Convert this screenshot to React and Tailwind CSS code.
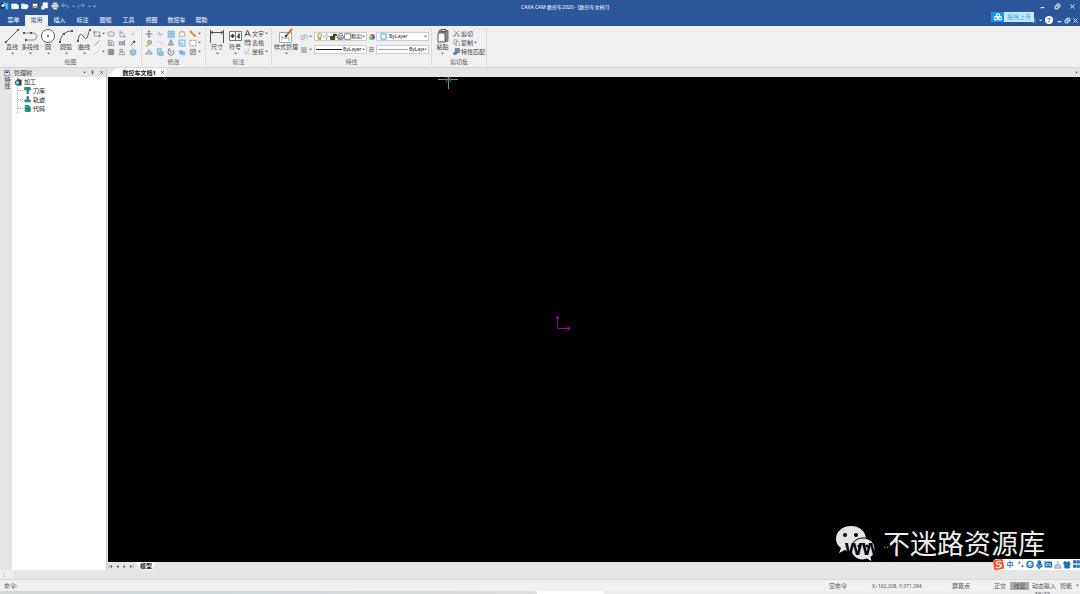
import { useState } from 'react'

// Small line drawings share one 12x12 grid
const glyphs = {
  point: <circle cx="6" cy="6" r="1.2" fill="#888" stroke="none" />,
  rect: <path d="M2 3h8v6H2z M1 2h2v2H1z M9 8h2v2H9z" />,
  ellipse: <><ellipse cx="6" cy="6" rx="5" ry="3.5" /><path d="M6 5.5v1" /></>,
  angle: <path d="M3 1v9h8 M3 3c4 0 6 3 7 7" />,
  slash: <path d="M2 10L10 2" />,
  blueSlash: <path d="M2 10L10 2" stroke="#8fc4e6" />,
  contour: <path d="M2 2h5l3 3v5H2z M4 5h3v3H4z" />,
  block: <path d="M2 4h5v5H2z M7 6l3-4v8z" fill="#a9c9e4" />,
  arrow: <path d="M2 10l4-4 M6 4l3-1-1 3z" fill="#222" stroke="#222" />,
  hatch: <path d="M2 2h8v8H2z M2 5h8 M2 7.5h8 M5 2v8 M7.5 2v8" fill="#bbb" />,
  region: <path d="M3 2h4v4H3z M2 8c2-3 6-3 8 0v2H2z" />,
  cube: <path d="M2 4l4-2 4 2v5l-4 2-4-2z M2 4l4 2 4-2 M6 6v5" fill="#a9d6f0" stroke="#6f8fa6" />,
  move: <path d="M6 1v10 M1 6h10 M4.500 2.500L6 1l1.500 1.500 M4.500 9.500L6 11l1.500-1.500" stroke="#444" />,
  trim: <path d="M1 6h10 M4 2l3 8" stroke="#78add2" />,
  array: <path d="M1.500 1.500h4v4h-4z M7 1.500h4v4H7z M1.500 7h4v4h-4z M7 7h4v4H7z" fill="#bfe0f5" stroke="#4b9fd3" />,
  stretch: <path d="M2 3h8v7H2z M4 2h4" strokeDasharray="2 1" />,
  pencil: <><path d="M2 2l8 8" stroke="#db8b22" strokeWidth="3" /><path d="M1 1l2 1" stroke="#333" /></>,
  paint: <><circle cx="7" cy="5" r="3" fill="#9ccbe8" /><path d="M1 10h5" stroke="#e0c200" strokeWidth="2.500" /></>,
  fillet: <path d="M1 4h4c4 0 5 3 5 6" stroke="#8fc4e6" />,
  mirror: <path d="M6 1L2 9h8z M6 1v9" fill="#b8d7ec" />,
  scale: <path d="M1.500 1.500h9v9h-9z M1.500 6h4.500v4.500" fill="#d5effb" stroke="#4b9fd3" />,
  frame: <path d="M1.500 2h9v8h-9z" fill="#fff" strokeDasharray="3 1" />,
  flip: <path d="M1 9h10L8 5H4z M4 3h4" fill="#c5dced" />,
  copy: <path d="M2 1h6v9H2z M5 6h6v5H5z" fill="#b8def3" stroke="#6899bb" />,
  rotate: <path d="M3 3a4.500 4.500 0 1 0 6 0 M3 0v3h3 M6 5v3" stroke="#444" />,
  cloud: <path d="M2 4h5v4H2z M5 6h5v4H5z" fill="#9fd0ee" stroke="#4b9fd3" />,
  edit: <path d="M2 2h8v8H2z M4 8l5-5 M4 5h3" fill="#ccc" />,
  style: <path d="M2 4h4v6H2z M7 2v6 M7 2l4 2v6" stroke="#8aa6bb" />,
  weight: <path d="M2 3h8 M2 6h8 M2 9h8" stroke="#777" strokeWidth="1.500" />,
  text: <path d="M1.500 11L5.500 1h1l4 10 M3 7.500h6" stroke="#333" strokeWidth="1.500" />,
  table: <><path d="M1.500 2h9v8h-9z M1.500 5h9 M5 5v5" /><path d="M1.500 3.500h9" strokeWidth="2.500" /><path d="M8 8h3v3H8z" fill="#c44" stroke="none" /></>,
  coord: <path d="M2 2v8h8 M5 6h2 M8 2v5 M4 9l2-2" stroke="#7c9cb5" strokeDasharray="2 1" />,
  scissors: <><path d="M2 1l7 8 M10 1L3 9" stroke="#444" /><circle cx="2.500" cy="10" r="1.500" /><circle cx="9.500" cy="10" r="1.500" /></>,
  pages: <path d="M1.500 1.500h5v7h-5z M5 4h4l2 2v5.500H5z" fill="#fff" />,
  match: <path d="M4 1h7v7H4z M1 8h5v3H1z M6 4h3" fill="#7199bd" stroke="#456" />,
  newDoc: <path d="M1 3h7l3 2v5H1z" fill="#fff" stroke="#fff" />,
  open: <path d="M1 3h4l1 1h4v2H4l-2 4H1z M4 6h7l-2 4H3z" fill="#fff" stroke="#fff" />,
  save: <path d="M2 2h8v8H2z M4 7h4v3H4z" fill="#fff" stroke="#333" />,
  saveAs: <path d="M3 1h7v8H3z M1 6h4v5H1z" fill="#fff" stroke="#dde" />,
  print: <path d="M3 1h6v3H3z M1 4h10v4H1z M3 7h6v4H3z" fill="#fff" stroke="#8b99a8" />,
  undo: <path d="M4 2L1 5l3 3 M1 5h7c3 0 3 4 1 5" stroke="#8aa9d7" strokeWidth="1.500" />,
  redo: <path d="M8 2l3 3-3 3 M11 5H4C1 5 1 9 3 10" stroke="#7195ca" strokeWidth="1.500" />,
  min: <path d="M3 8h6" stroke="#fff" strokeWidth="2" />,
  restore: <path d="M2 5h5v5H2z M5 5V2h5v5H7" stroke="#fff" strokeWidth="1.500" />,
  close: <path d="M2.500 2.500l7 7 M9.500 2.500l-7 7" strokeWidth="1.500" stroke="currentColor" />,
  pin: <path d="M4 2h4 M5 2v5 M7 2v5 M3 7h6 M6 7v4" stroke="#555" strokeWidth="1.500" />,
  bulb: <path d="M6 1c-5 0-4 5-2 6v4h4V7c2-1 3-6-2-6z M4 8.500h4" fill="#ffe98a" stroke="#6b6340" />,
  sun: <><circle cx="6" cy="6" r="3" /><path d="M6 0v2 M6 10v2 M0 6h2 M10 6h2" stroke="#887f50" /></>,
  lock: <path d="M1 6h7v5H1z M6 6V2h5v3" fill="#4b5210" stroke="#2b3005" strokeWidth="1.500" />,
  printer: <path d="M3 5V1h6v4 M1 5h10v5H1z M3 8h6v3H3z" fill="#e5e5e5" stroke="#555" />,
  box: <path d="M1 1h10v10H1z" fill="#fff" stroke="#444" />,
  blueBox: <path d="M1.500 1.500h9v9h-9z" fill="#fff" stroke="#3997dd" strokeWidth="1.500" />,
  gear: <><path d="M5 1l6 2v8H5z" fill="#30353a" /><circle cx="5" cy="7" r="3.500" fill="#19b5aa" stroke="#164a4a" /><path d="M5 5v4 M3 7h4" stroke="#fff" /></>,
  tool: <path d="M1 1h10v4H8v6H5V5H1z M4 3h4" fill="#11b3ac" stroke="#164a4a" />,
  track: <path d="M5 1h3v6h3v3H2L1 7h4z" fill="#11b3ac" stroke="#164a4a" />,
  code: <path d="M2 1h6l3 3v7H2z M4 6h5 M4 8.500h5" fill="#11b3ac" stroke="#164a4a" />,
  first: <path d="M2 2v8 M9 3L5 6l4 3z" fill="#555" stroke="#555" />,
  prev: <path d="M8 3L4 6l4 3z" fill="#555" stroke="#555" />,
  next: <path d="M4 3l4 3-4 3z" fill="#555" stroke="#555" />,
  last: <path d="M10 2v8 M3 3l4 3-4 3z" fill="#555" stroke="#555" />,
}

const large = {
  line: <><path d="M2 14L14 2" /><path d="M1 14h2 M13 2h2" strokeWidth="2" /></>,
  polyline: <><path d="M2 5h9c5 0 5 7 0 7H4" stroke="#888" /><path d="M1 5h2 M8 5h2 M3 12h2" strokeWidth="2" /></>,
  circle: <><circle cx="8" cy="8" r="6.500" fill="#fff" /><circle cx="8" cy="8" r="1" fill="#555" stroke="none" /></>,
  arc: <><path d="M2 14C3 7 7 3 14 3" /><path d="M1 14h2 M5 6h2 M13 3h2" strokeWidth="2" /></>,
  curve: <><path d="M2 13c1-9 4-7 6-4 4 6 4-6 6-7" /><path d="M1 13h2 M13 2h2" strokeWidth="2" /></>,
  size: <path d="M1.500 2v13 M14.500 2v13 M2 4.500h12 M4 3L2 4.500 4 6 M12 3l2 1.500L12 6" />,
  symbol: <><path d="M2.500 3.500h12v9h-12z M8.500 3.500v9" fill="#fff" stroke="#777" /><path d="M3.500 8h4 M5.500 6v4 M12 5.500v5 M10 8.500h2" stroke="#333" strokeWidth="1.500" /></>,
  styles: <><path d="M1.500 4.500h12v10h-12z M4 12V8l3 3 4-2v4" fill="#fff" stroke="#9aabb8" /><path d="M9 7l5-6" stroke="#c47430" strokeWidth="2" /><path d="M7 9l2-2" stroke="#333" strokeWidth="2" /></>,
  paste: <><path d="M4 2.500h9v11H4z" fill="#888" stroke="#777" /><path d="M6 1.500h5v2H6z" fill="#ddd" /><path d="M3 5h7v9H3z" fill="#fff" /></>,
}

function Icon({ name, className = 'size-2' }) {
  return (
    <svg viewBox="0 0 12 12" aria-hidden="true" className={`shrink-0 ${className}`} fill="none" stroke="#777" strokeWidth="1">
      {glyphs[name]}
    </svg>
  )
}

function Caret({ className = 'text-[#555]' }) {
  return (
    <svg viewBox="0 0 4 4" aria-hidden="true" className={`size-[3px] shrink-0 ${className}`} fill="currentColor">
      <path d="M0 1h4L2 3z" />
    </svg>
  )
}

function BigButton({ icon, label, width = 'w-[18px]' }) {
  return (
    <button type="button" className={`flex shrink-0 flex-col items-center whitespace-nowrap ${width}`}>
      <svg viewBox="0 0 16 16" aria-hidden="true" className="size-4" fill="none" stroke="#555" strokeWidth="1">
        {large[icon]}
      </svg>
      <span className="leading-[7px]">{label}</span>
      <span className="flex h-[5px] items-center"><Caret /></span>
    </button>
  )
}

function Group({ title, width, children }) {
  return (
    <section className={`flex shrink-0 flex-col border-r border-[#dcdcdc] ${width}`}>
      <div className="flex h-[30px] items-start">{children}</div>
      <h2 className="text-center leading-[12px] text-[#666]">{title}</h2>
    </section>
  )
}

function SmallButton({ icon, caret }) {
  return (
    <button type="button" aria-label={icon} className="flex h-[9px] items-center gap-px">
      <Icon name={icon} />
      {caret && <Caret />}
    </button>
  )
}

function TextButton({ icon, label, caret }) {
  return (
    <button type="button" className="flex h-[9px] items-center gap-px whitespace-nowrap">
      <Icon name={icon} className="size-[7px]" />
      {label}
      {caret && <Caret />}
    </button>
  )
}

function Combo({ label, value, children }) {
  return (
    <div className="flex h-[9px] w-[53px] items-center border border-[#ccc] bg-white px-px">
      {children}
      <select aria-label={label} className="h-[7px] min-w-0 flex-1 appearance-none overflow-hidden bg-transparent text-[5px] leading-[7px] text-[#222]">
        <option>{value}</option>
      </select>
      <Caret />
    </div>
  )
}

const tabs = ['菜单', '常用', '插入', '标注', '图幅', '工具', '视图', '数控车', '帮助']

const drawIcons = ['ellipse', 'angle', 'point', 'contour', 'block', 'arrow', 'hatch', 'region', 'cube']

const modifyIcons = [
  'move', 'trim', 'array', 'stretch', 'pencil',
  'paint', 'fillet', 'mirror', 'scale', 'frame',
  'flip', 'copy', 'rotate', 'cloud', 'edit',
]

const treeItems = [
  { icon: 'tool', label: '刀库' },
  { icon: 'track', label: '轨迹' },
  { icon: 'code', label: '代码' },
]

function TitleBar({ active, onSelect }) {
  return (
    <header className="relative bg-[#2b579a] text-white">
      <div className="flex h-3 items-center">
        <div className="flex flex-[521_1_0] items-center">
          <svg viewBox="0 0 12 12" aria-hidden="true" className="mr-px size-2.5">
            <path d="M1 2h5v7H1z" fill="#102b5c" />
            <path d="M4 1l6 2v7H6V6H4z" fill="#42b3ef" />
            <path d="M2 4h3v3H2z" fill="#fff" />
          </svg>
          <div className="flex items-center gap-0.5">
            {['newDoc', 'open', 'save', 'saveAs', 'print'].map((name) => (
              <button key={name} type="button" aria-label={name}><Icon name={name} /></button>
            ))}
            <button type="button" aria-label="撤消" className="flex items-center gap-[3px]"><Icon name="undo" /><Caret className="text-[#9ab4dc]" /></button>
            <button type="button" aria-label="恢复" className="flex items-center gap-[3px]"><Icon name="redo" /><Caret className="text-[#9ab4dc]" /></button>
            <Caret className="text-[#c5d4ec]" />
          </div>
        </div>
        <h1 className="pt-0.5 text-[5px] whitespace-nowrap">CAXA CAM 数控车2020 - [数控车文档1]</h1>
        <div className="flex flex-[467_1_0] items-center justify-end gap-2 pr-1">
          <button type="button" aria-label="最小化"><Icon name="min" className="size-[7px]" /></button>
          <button type="button" aria-label="还原"><Icon name="restore" className="size-[7px]" /></button>
          <button type="button" aria-label="关闭"><Icon name="close" className="size-[7px] text-white" /></button>
        </div>
      </div>
      <nav className="flex h-3.5 items-end justify-between">
        <div className="flex pl-0.5">
          {tabs.map((tab) => (
            <button
              key={tab}
              type="button"
              onClick={() => onSelect(tab)}
              className={`h-[11px] leading-[11px] ${tab === '数控车' ? 'w-[27px]' : 'w-[23px]'} ${
                tab === active ? 'bg-[#f0f0f0] text-[#2b579a]' : 'text-white'
              }`}
            >
              {tab}
            </button>
          ))}
        </div>
        <div className="flex h-3 items-center gap-px pr-px">
          <span className="text-[5px] text-[#a9bfdf]">格</span>
          <Caret className="mx-0.5 text-white" />
          <button type="button" aria-label="帮助" className="mr-0.5 size-[8px] rounded-full bg-white text-[6px] leading-[8px] font-bold text-[#2b579a]">?</button>
          <button type="button" aria-label="最小化文档"><Icon name="min" className="size-[7px]" /></button>
          <button type="button" aria-label="还原文档"><Icon name="restore" className="size-[7px]" /></button>
          <button type="button" aria-label="关闭文档"><Icon name="close" className="size-[7px] text-white" /></button>
        </div>
      </nav>
      {/* Upload badge */}
      <button type="button" className="absolute top-3 right-[46px] flex h-2.5 w-[43px] items-center overflow-hidden rounded-[1px] bg-[#c9ebff] text-[#36a5f5]">
        <span className="flex h-full w-[13px] items-center justify-center bg-[#1296f3]">
          <svg viewBox="0 0 12 10" aria-hidden="true" className="h-2 w-2.5" fill="none" stroke="#fff" strokeWidth="1.500">
            <circle cx="6" cy="3" r="2" />
            <circle cx="3.500" cy="6.500" r="2" />
            <circle cx="8.500" cy="6.500" r="2" />
          </svg>
        </span>
        <span className="flex-1 text-center whitespace-nowrap">拖拽上传</span>
      </button>
    </header>
  )
}

function Ribbon() {
  return (
    <div className="flex h-[42px] border-b border-[#d5d5d5] bg-[#f0f0f0] pt-0.5 pb-px text-[#444]">
      <Group title="绘图" width="w-[142px]">
        <div className="flex pl-[3px]">
          <BigButton icon="line" label="直线" />
          <BigButton icon="polyline" label="多段线" />
          <BigButton icon="circle" label="圆" />
          <BigButton icon="arc" label="圆弧" />
          <BigButton icon="curve" label="曲线" />
        </div>
        <div className="flex">
          <div className="w-[14px] pt-px">
            <SmallButton icon="rect" caret />
            <SmallButton icon="slash" />
            <SmallButton icon="blueSlash" caret />
          </div>
          <div className="grid grid-cols-[11px_11px_11px] pt-px">
            {drawIcons.map((name) => <SmallButton key={name} icon={name} />)}
          </div>
        </div>
      </Group>
      <Group title="修改" width="w-[64px]">
        <div className="grid grid-cols-[11px_11px_11px_11px_12px] pt-px pl-[3px]">
          {modifyIcons.map((name, i) => <SmallButton key={name} icon={name} caret={i % 5 === 4} />)}
        </div>
      </Group>
      <Group title="标注" width="w-[66px]">
        <div className="flex pl-0.5">
          <BigButton icon="size" label="尺寸" />
          <BigButton icon="symbol" label="符号" />
        </div>
        <div className="pt-px">
          <TextButton icon="text" label="文字" caret />
          <TextButton icon="table" label="表格" />
          <TextButton icon="coord" label="坐标" caret />
        </div>
      </Group>
      <Group title="特性" width="w-[160px]">
        <BigButton icon="styles" label="样式管理" width="w-[28px]" />
        <div className="grid grid-cols-[14px_53px_9px_53px] items-center gap-y-1 pt-1">
          <SmallButton icon="style" caret />
          <Combo label="图层" value="粗实线层">
            {['bulb', 'sun', 'lock', 'printer', 'box'].map((name) => (
              <Icon key={name} name={name} className="size-[7px]" />
            ))}
          </Combo>
          <span className="mx-auto size-[6px] rounded-full bg-[conic-gradient(#e44,#c4c,#46e,#2cc,#3c3,#ed3,#e44)]" />
          <Combo label="颜色" value="ByLayer">
            <Icon name="blueBox" className="mx-0.5 size-[7px]" />
          </Combo>
          <SmallButton icon="weight" caret />
          <Combo label="线型" value="ByLayer">
            <span className="mr-px h-px w-[26px] shrink-0 bg-[#222]" />
          </Combo>
          <span className="flex justify-center"><Icon name="weight" className="size-[7px]" /></span>
          <Combo label="线宽" value="ByLayer">
            <span className="mr-px h-px w-[30px] shrink-0 bg-[#e08a8a]" />
          </Combo>
        </div>
      </Group>
      <Group title="剪切板" width="w-[55px]">
        <BigButton icon="paste" label="粘贴" width="w-[21px]" />
        <div className="pt-px">
          <TextButton icon="scissors" label="剪切" />
          <TextButton icon="pages" label="复制" caret />
          <TextButton icon="match" label="特性匹配" />
        </div>
      </Group>
    </div>
  )
}

function TreePanel() {
  return (
    <aside className="flex w-[95px] shrink-0 flex-col border-r border-[#ccc]">
      <div className="flex h-[9px] items-center gap-1 px-0.5 text-[#444]">
        <h2 className="flex-1">管理树</h2>
        <button type="button" aria-label="选项"><Caret /></button>
        <button type="button" aria-label="固定"><Icon name="pin" className="size-[5px]" /></button>
        <button type="button" aria-label="关闭面板"><Icon name="close" className="size-[5px] text-[#444]" /></button>
      </div>
      <div className="flex-1 bg-white pl-0.5 text-[#222]">
        <div className="flex h-[9px] items-center gap-0.5"><Icon name="gear" />加工</div>
        <ul className="ml-[3px] border-l border-dotted border-[#aaa]">
          {treeItems.map((item) => (
            <li key={item.label} className="flex h-[9px] items-center">
              <span className="mr-px w-[5px] border-t border-dotted border-[#aaa]" />
              <Icon name={item.icon} className="mr-0.5 size-[7px]" />
              {item.label}
            </li>
          ))}
        </ul>
      </div>
    </aside>
  )
}

function Watermark() {
  return (
    <div className="absolute right-[35px] bottom-0 flex h-9 items-center text-[27px] leading-9 whitespace-nowrap text-[#eee]">
      <svg viewBox="0 0 40 36" aria-hidden="true" className="mr-2 h-9 w-10">
        <path d="M16 0C7 0 1 6 1 13c0 4 2 7 5 9l-2 5 6-3c2 1 4 1 6 1 9 0 15-5 15-12S25 0 16 0z" fill="#e5e5e5" />
        <path d="M28 12c-7 0-12 5-12 11s5 11 12 11l4-1 5 3-1-5c3-2 4-5 4-8 0-6-5-11-12-11z" fill="#e5e5e5" stroke="#000" />
        <circle cx="10" cy="9" r="2" />
        <circle cx="21" cy="9" r="2" />
        <circle cx="24" cy="20" r="1.500" />
        <circle cx="32" cy="20" r="1.500" />
      </svg>
      <span>不迷路资源库</span>
      <span className="absolute top-1 left-2.5 font-['Liberation_Sans',sans-serif] text-[22px] font-bold text-black">www</span>
    </div>
  )
}

function Canvas() {
  return (
    <div className="relative flex-1 overflow-hidden bg-black">
      {/* Crosshair cursor */}
      <svg viewBox="0 0 20 12" aria-hidden="true" className="absolute top-0 left-[330px] h-3 w-5" fill="none">
        <path d="M0 2.500h20 M10.500 0v12" stroke="#888" />
        <path d="M8.500 0v4.500h4V0" stroke="#087a42" />
      </svg>
      {/* Origin axes */}
      <svg viewBox="0 0 16 16" aria-hidden="true" className="absolute top-[49%] left-[46%] h-4 w-4" fill="none" stroke="#a000a0">
        <path d="M2.500 1v12.500H15 M0.500 4l2-3 2 3 M12 11.500l3 2-3 2" />
      </svg>
      <Watermark />
    </div>
  )
}

function InputMethodBar() {
  return (
    <div className="absolute right-0 bottom-0 flex h-[11px] w-[87px] items-center justify-between rounded-l-sm bg-white text-[#1d6fc4]">
      <svg viewBox="0 0 12 12" aria-hidden="true" className="size-[11px] shrink-0">
        <rect x="0.500" y="0.500" width="11" height="11" rx="2" fill="#f4511e" transform="rotate(-8 6 6)" />
        <path d="M9 3C6 2 3 3 4 5s5 0 5 2-3 3-6 2" fill="none" stroke="#fff" strokeWidth="1.500" />
      </svg>
      <span className="pl-0.5 text-[7px] font-bold">中</span>
      <svg viewBox="0 0 74 10" aria-hidden="true" className="h-[9px] w-[66px]" fill="none" stroke="currentColor" strokeWidth="1.500">
        <path d="M5 3h2 M9 6l1 2" strokeWidth="2" />
        <circle cx="18" cy="5" r="3.500" />
        <path d="M16 4h1 M19 4h1 M16 6.500h4" strokeWidth="1" />
        <rect x="27" y="1" width="3" height="5" rx="1.500" fill="currentColor" />
        <path d="M25.500 5c0 4 6 4 6 0 M28.500 8v2" />
        <path d="M35 2.500h7v5h-7z M36 4.500h5 M37 6.500h3" />
        <path d="M49 1v4 M45.500 9c0-5 7-5 7 0z" stroke="#a8b8cc" fill="#c8d4e2" />
        <path d="M56 2h2l1 1 1-1h2l1 3-1 .5V9h-5V5.500L56 5z" fill="currentColor" strokeWidth="1" />
        <path d="M67 1h2v2h-2z M71 1h2v2h-2z M67 6h2v2h-2z M71 6h2v2h-2z" fill="currentColor" />
      </svg>
    </div>
  )
}

export default function App() {
  const [active, setActive] = useState('常用')

  return (
    <div className="relative flex h-screen flex-col overflow-hidden bg-[#e5e5e5] font-['Noto_Sans','Noto_Sans_CJK_SC',sans-serif] text-[6px] leading-[8px]">
      <TitleBar active={active} onSelect={setActive} />
      <Ribbon />

      <main className="relative flex min-h-0 flex-1">
        <div className="w-3 shrink-0 pt-px">
          <button type="button" className="ml-1 flex flex-col items-center gap-px bg-[#dcdcdc] py-px text-[#444]">
            <svg viewBox="0 0 12 12" aria-hidden="true" className="size-[6px]">
              <path d="M1 1h10v10H1z" fill="#dfeaf5" stroke="#456" />
              <path d="M3 3h6v3H3z" fill="#1d4b9a" />
            </svg>
            <span className="h-3 leading-[6px] [writing-mode:vertical-rl]">特性</span>
          </button>
        </div>
        <TreePanel />
        <div className="ml-px flex min-w-0 flex-1 flex-col">
          <div className="flex h-[9px] items-center justify-between pr-0.5">
            <div className="flex h-full w-[58px] items-center justify-end gap-1 bg-[#fafafa] pr-px text-[#222] [clip-path:polygon(8px_0,100%_0,100%_100%,0_100%)]">
              <span className="font-bold whitespace-nowrap">数控车文档1</span>
              <button type="button" aria-label="关闭标签"><Icon name="close" className="size-[5px] text-[#444]" /></button>
            </div>
            <Caret />
          </div>
          <Canvas />
          <div className="flex h-2 items-center">
            {['first', 'prev', 'next', 'last'].map((name) => (
              <button key={name} type="button" aria-label={name} className="mr-0.5"><Icon name={name} className="size-[5px]" /></button>
            ))}
            <button type="button" className="h-full w-5 bg-white font-bold text-[#222] [clip-path:polygon(0_0,100%_0,80%_100%,20%_100%)]">模型</button>
          </div>
        </div>
        <InputMethodBar />
      </main>

      <div className="flex h-2.5 items-center border-b border-[#d8d8d8]">
        <span className="h-full w-3.5 bg-[#eee] pl-px text-[#999]">⋮</span>
      </div>

      {/* Status bar */}
      <footer className="flex h-[11px] items-center bg-[#f0f0f0] text-[#555]">
        <label htmlFor="command" className="pl-1">命令:</label>
        <input id="command" className="h-2 min-w-0 flex-1 bg-transparent outline-none" />
        <span className="w-[43px]">空命令</span>
        <span className="w-20 text-[5px]">X:-162.308, Y:371.394</span>
        <span className="w-[42px]">屏幕点</span>
        <button type="button" className="w-4 text-left">正交</button>
        <button type="button" className="h-2 w-[19px] bg-[#aaa]">线宽</button>
        <button type="button" className="w-[30px] whitespace-nowrap">动态输入</button>
        <button type="button" className="flex w-[21px] items-center gap-1 pl-px whitespace-nowrap">智能<Caret /></button>
      </footer>

      {/* Task bar edge */}
      <div className="flex h-[3px] overflow-hidden bg-[linear-gradient(90deg,#d3d6d6_0%,#cfd8da_18%,#ddd_49%,#ededed_56%)]">
        <span className="ml-[49.7%] w-[67px] bg-white" />
        <span className="mr-[30px] ml-auto leading-[6px] text-[#333]">16:22</span>
      </div>
    </div>
  )
}
